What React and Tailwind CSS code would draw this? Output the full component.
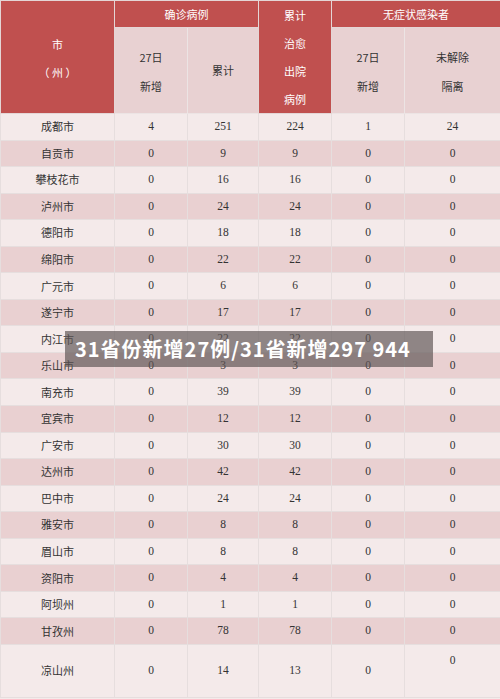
const ROWS = [
  ['成都市', 4, 251, 224, 1, 24],
  ['自贡市', 0, 9, 9, 0, 0],
  ['攀枝花市', 0, 16, 16, 0, 0],
  ['泸州市', 0, 24, 24, 0, 0],
  ['德阳市', 0, 18, 18, 0, 0],
  ['绵阳市', 0, 22, 22, 0, 0],
  ['广元市', 0, 6, 6, 0, 0],
  ['遂宁市', 0, 17, 17, 0, 0],
  ['内江市', 0, 22, 22, 0, 0],
  ['乐山市', 0, 3, 3, 0, 0],
  ['南充市', 0, 39, 39, 0, 0],
  ['宜宾市', 0, 12, 12, 0, 0],
  ['广安市', 0, 30, 30, 0, 0],
  ['达州市', 0, 42, 42, 0, 0],
  ['巴中市', 0, 24, 24, 0, 0],
  ['雅安市', 0, 8, 8, 0, 0],
  ['眉山市', 0, 8, 8, 0, 0],
  ['资阳市', 0, 4, 4, 0, 0],
  ['阿坝州', 0, 1, 1, 0, 0],
  ['甘孜州', 0, 78, 78, 0, 0],
];

const cjk = "font-['Noto_Sans_CJK_SC',sans-serif]";
const num = "font-['Liberation_Serif','Noto_Sans_CJK_SC',serif]";

function HeadRed({ children, className = '', ...rest }) {
  return (
    <th {...rest} className={`bg-[#c0504f] text-white font-normal text-[11px] leading-none p-0 border border-[#e4d6d6] ${className}`}>
      {children}
    </th>
  );
}

function HeadPink({ children, className = '', ...rest }) {
  return (
    <th {...rest} className={`bg-[#e8d1d2] text-[#333] font-normal text-[11px] leading-none p-0 border border-[#ece4e4] ${className}`}>
      {children}
    </th>
  );
}

const cell = 'text-center text-[11.5px] leading-none p-0 text-[#333] border border-[#e6dede]';

export default function App() {
  return (
    <div className={`relative w-[500px] h-[699px] overflow-hidden bg-[#f4eaea] ${cjk}`}>
      <table className="w-[500px] table-fixed border-collapse">
        <colgroup>
          <col className="w-[114px]" />
          <col className="w-[73px]" />
          <col className="w-[71px]" />
          <col className="w-[73px]" />
          <col className="w-[73px]" />
          <col className="w-[96px]" />
        </colgroup>
        <thead>
          <tr className="h-[27px]">
            <HeadRed rowSpan={2}>
              <div className="flex flex-col items-center gap-[17px] pt-[2px]">
                <span>市</span>
                <span>（ 州 ）</span>
              </div>
            </HeadRed>
            <HeadRed className="text-[#f6e6e6]" colSpan={2}>确诊病例</HeadRed>
            <HeadRed className="align-top" rowSpan={2}>
              <div className="flex flex-col items-center gap-[17px] pt-[9px] pb-[8px]">
                <span>累计</span>
                <span>治愈</span>
                <span>出院</span>
                <span>病例</span>
              </div>
            </HeadRed>
            <HeadRed className="text-[#f6e6e6]" colSpan={2}>无症状感染者</HeadRed>
          </tr>
          <tr className="h-[86px]">
            <HeadPink>
              <div className="flex flex-col items-center gap-[18px] pt-[2px]">
                <span>27日</span>
                <span>新增</span>
              </div>
            </HeadPink>
            <HeadPink>累计</HeadPink>
            <HeadPink>
              <div className="flex flex-col items-center gap-[18px] pt-[2px]">
                <span>27日</span>
                <span>新增</span>
              </div>
            </HeadPink>
            <HeadPink>
              <div className="flex flex-col items-center gap-[18px] pt-[2px]">
                <span>未解除</span>
                <span>隔离</span>
              </div>
            </HeadPink>
          </tr>
        </thead>
        <tbody>
          {ROWS.map((r, i) => (
            <tr key={r[0]} className={`h-[26.55px] ${i % 2 === 0 ? 'bg-[#f4eaea]' : 'bg-[#e9d0d1]'}`}>
              <td className={`${cell} text-[11px]`}>{r[0]}</td>
              {r.slice(1).map((v, j) => (
                <td key={j} className={`${cell} ${num}`}>{v}</td>
              ))}
            </tr>
          ))}
          <tr className="h-[53px] bg-[#f4eaea]">
            <td className={`${cell} text-[11px]`}>凉山州</td>
            <td className={`${cell} ${num}`}>0</td>
            <td className={`${cell} ${num}`}>14</td>
            <td className={`${cell} ${num}`}>13</td>
            <td className={`${cell} ${num}`}>0</td>
            <td className={`${cell} ${num} align-top pt-[10px]`}>0</td>
          </tr>
        </tbody>
      </table>

      <div className="absolute left-[65px] top-[331px] w-[368px] h-[36px] bg-[rgba(95,85,85,0.68)] flex items-center pl-[10px]">
        <span className="text-white font-bold text-[20px] leading-none tracking-[1px] font-['Noto_Sans_CJK_SC',sans-serif]">
          31省份新增27例/31省新增297 944
        </span>
      </div>
    </div>
  );
}
